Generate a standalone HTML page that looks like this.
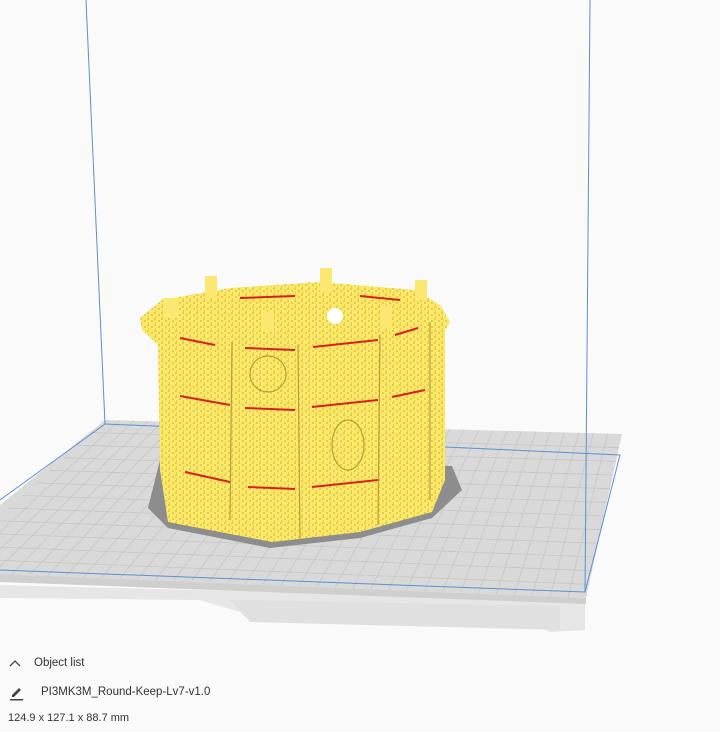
<!DOCTYPE html>
<html><head><meta charset="utf-8"><style>
html,body{margin:0;padding:0;width:720px;height:732px;overflow:hidden;background:#fafafa;font-family:"Liberation Sans","DejaVu Sans",sans-serif;}
svg{position:absolute;left:0;top:0}
.t{position:absolute;color:#333;font-size:11px}
</style></head><body>
<svg width="720" height="732" viewBox="0 0 720 732">
<defs>
<pattern id="tex" width="7" height="6" patternUnits="userSpaceOnUse">
<rect width="7" height="6" fill="#fbe867"/>
<path d="M0 1h2M4 3h2M1 5h1" stroke="#b89c30" stroke-width="0.7"/>
</pattern>
</defs>
<polygon points="0,585 585,600 585,630 550,632 520,618 240,612 200,600 0,598" fill="#e6e6e6"/>
<polygon points="230,600 560,606 560,630 250,622" fill="#e0e0e0"/>
<polygon id="plate" points="105,420 622,434 586,598 0,574 0,505" fill="#d9d9d9"/>
<polygon points="0,574 586,598 586,604 0,582" fill="#cfcfcf"/>
<g id="grid" stroke="#c6c6c6" stroke-width="0.8"></g>
<g stroke="#5b8fd6" stroke-width="1" fill="none">
<line x1="86" y1="0" x2="105" y2="424"/>
<line x1="590" y1="0" x2="585" y2="592"/>
<polyline points="105,424 200,428"/>
<polyline points="445,447 620,455 585,592 0,570"/>
<line x1="105" y1="424" x2="0" y2="500"/>
</g>
<polygon points="160,460 452,466 462,490 432,518 360,538 270,548 168,528 148,508" fill="#8d8d8d"/>
<polygon points="140,318 162,300 230,288 320,282 415,290 440,305 450,322 445,330 445,480 432,512 360,532 272,542 168,522 160,470 158,345 142,330" fill="url(#tex)"/>
<g fill="#fbe870">
<rect x="205" y="276" width="12" height="22"/><rect x="320" y="268" width="12" height="24"/><rect x="415" y="280" width="12" height="20"/>
<rect x="163" y="298" width="14" height="20"/><rect x="262" y="312" width="12" height="20"/><rect x="380" y="306" width="12" height="22"/>
</g>
<circle cx="335" cy="316" r="8" fill="#fff"/>
<g stroke="#d92020" stroke-width="2" fill="none">
<path d="M180 338 L215 345"/><path d="M245 348 L295 350"/><path d="M313 347 L378 340"/><path d="M395 335 L418 328"/>
<path d="M180 396 L230 405"/><path d="M245 408 L295 410"/><path d="M312 407 L378 400"/><path d="M392 397 L425 390"/>
<path d="M185 472 L230 482"/><path d="M248 487 L295 489"/><path d="M312 487 L378 480"/>
<path d="M240 298 L295 296"/><path d="M360 296 L400 300"/>
</g>
<g stroke="#a89030" stroke-width="1.2" fill="none" opacity="0.8">
<line x1="232" y1="342" x2="230" y2="520"/><line x1="298" y1="345" x2="300" y2="540"/><line x1="380" y1="335" x2="378" y2="525"/><line x1="430" y1="322" x2="430" y2="500"/>
<circle cx="268" cy="374" r="18"/><ellipse cx="348" cy="445" rx="16" ry="25"/>
</g>
</svg>
<svg width="720" height="732" style="pointer-events:none">
<path d="M10 666 L15 661 L20 666" stroke="#444" stroke-width="1.3" fill="none"/>
<path d="M12 695 L19 688 L21 690 L14 697 L12 697Z" fill="#444"/><rect x="10" y="699" width="13" height="1.5" fill="#444"/>
</svg>
<div class="t" style="left:34px;top:657px;font-size:11.5px">Object list</div>
<div class="t" style="left:41px;top:686px;font-size:11.5px">PI3MK3M_Round-Keep-Lv7-v1.0</div>
<div class="t" style="left:8px;top:712px;font-size:11px">124.9 x 127.1 x 88.7 mm</div>
<script>
var g=document.getElementById('grid'),ns='http://www.w3.org/2000/svg';
var BL=[105,420],BR=[622,434],FR=[586,598],FL=[-60,571];
function P(u,v){var a=[BL[0]+(BR[0]-BL[0])*u,BL[1]+(BR[1]-BL[1])*u],b=[FL[0]+(FR[0]-FL[0])*u,FL[1]+(FR[1]-FL[1])*u];return[a[0]+(b[0]-a[0])*v,a[1]+(b[1]-a[1])*v];}
function L(p,q){var l=document.createElementNS(ns,'line');l.setAttribute('x1',p[0]);l.setAttribute('y1',p[1]);l.setAttribute('x2',q[0]);l.setAttribute('y2',q[1]);g.appendChild(l);}
for(var i=1;i<36;i++){var u=i/36;L(P(u,0),P(u,1));}
for(var j=1;j<12;j++){var v=j/12;L(P(0,v),P(1,v));}
</script>
</body></html>
